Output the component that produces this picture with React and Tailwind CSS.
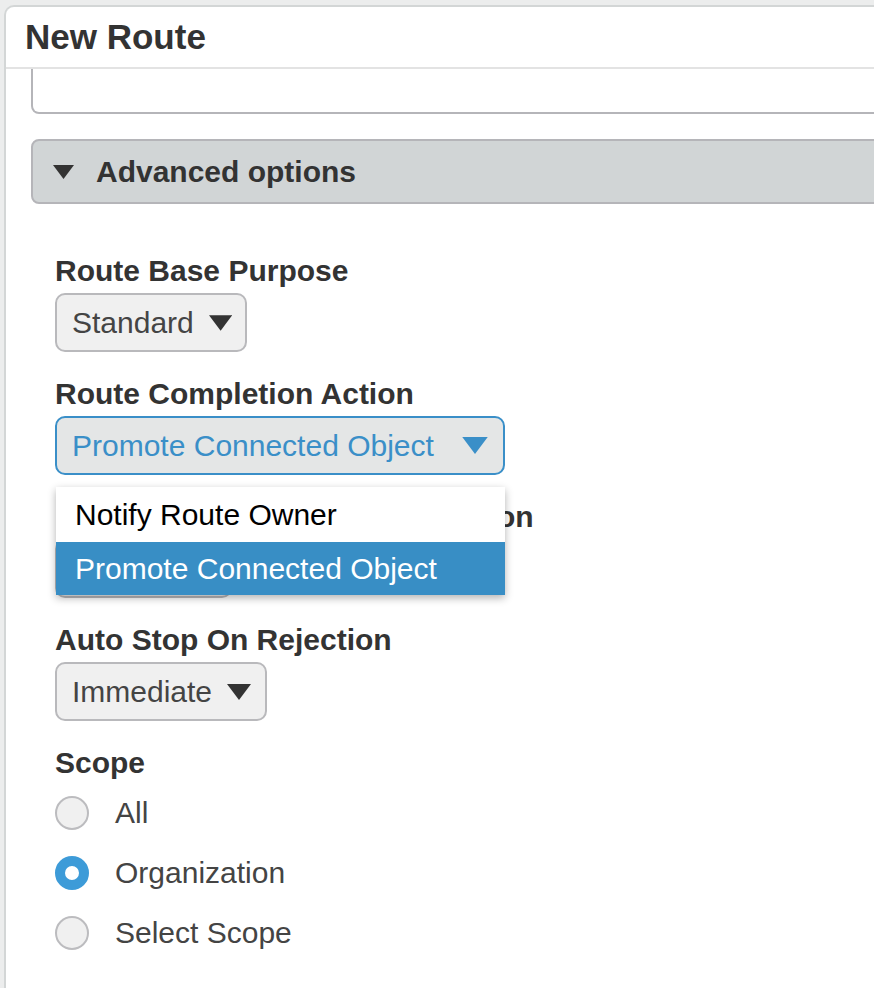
import React from 'react'

const Caret = ({ className }) => (
  <svg className={className} viewBox="0 0 24 16" fill="currentColor">
    <path d="M0 0h24L12 16z" />
  </svg>
)

const Label = ({ children, className = '' }) => (
  <div className={`text-[30px] leading-[34px] font-bold text-[#333] whitespace-nowrap ${className}`}>{children}</div>
)

const Select = ({ value, width }) => (
  <div
    className={`mt-[5px] h-[59px] ${width} flex items-center gap-[15px] pl-[15px] pr-[13px] rounded-[10px] border-2 border-[#b9b9bc] bg-[#f0f0f0] text-[30px] leading-[34px] text-[#444]`}
  >
    <span>{value}</span>
    <Caret className="w-[24px] h-[16px] text-[#333]" />
  </div>
)

const Radio = ({ label, checked }) => (
  <div className="h-[60px] flex items-center gap-[26px]">
    {checked ? (
      <span className="w-[34px] h-[34px] rounded-full border-[10px] border-[#3d9bd8] bg-white" />
    ) : (
      <span className="w-[34px] h-[34px] rounded-full border-2 border-[#bcbcbf] bg-[#f0f0f0]" />
    )}
    <span className="text-[30px] leading-[34px] text-[#444]">{label}</span>
  </div>
)

export default function App() {
  return (
    <div
      className="w-[874px] h-[988px] overflow-hidden bg-[#eceded]"
      style={{ fontFamily: '"Liberation Sans", Arial, sans-serif' }}
    >
      <div className="ml-[4px] mt-[5px] w-[1000px] h-[1000px] bg-white border-t-2 border-l-2 border-[#d3d6d6] rounded-tl-[10px]">
        {/* header */}
        <div className="h-[62px] flex items-center pl-[19px] border-b-2 border-[#e3e3e3]">
          <h1 className="text-[35px] leading-[40px] font-bold text-[#333]">New Route</h1>
        </div>

        <div className="pl-[25px]">
          {/* textarea tail */}
          <div className="h-[45px] border-2 border-t-0 border-[#b5b5b9] rounded-b-[8px]" />

          {/* advanced options bar */}
          <div className="mt-[25px] h-[65px] flex items-center pl-[20px] gap-[22px] bg-[#d1d5d6] border-2 border-[#b5b5b9] rounded-l-[8px]">
            <Caret className="w-[21px] h-[14px] text-[#333]" />
            <span className="text-[30px] leading-[34px] font-bold text-[#333]">Advanced options</span>
          </div>

          {/* form */}
          <div className="pl-[24px] pt-[50px]">
            <Label>Route Base Purpose</Label>
            <Select value="Standard" width="w-[192px]" />

            <div className="mt-[25px]">
              <Label>Route Completion Action</Label>
              <div className="relative w-[450px]">
                <div className="mt-[5px] h-[59px] flex items-center justify-between pl-[15px] pr-[15px] rounded-[10px] border-2 border-[#3a8fc8] bg-[#e4e6e6] text-[30px] leading-[34px] text-[#3a8fc8]">
                  <span>Promote Connected Object</span>
                  <Caret className="w-[26px] h-[17px] text-[#3a8fc8]" />
                </div>
                <div className="absolute left-[1px] right-0 top-[calc(100%+12px)] z-10 bg-white shadow-[0_3px_8px_rgba(0,0,0,0.3)]">
                  <div className="h-[55px] flex items-center pl-[19px] text-[30px] leading-[34px] text-black">
                    Notify Route Owner
                  </div>
                  <div className="h-[53px] flex items-center pl-[19px] text-[30px] leading-[34px] text-white bg-[#388ec5]">
                    Promote Connected Object
                  </div>
                </div>
              </div>
            </div>

            <div className="mt-[25px]">
              <Label className="tracking-[-0.2px]">Notify Owner On Task Completion</Label>
              <Select value="Enabled" width="w-[177px]" />
            </div>

            <div className="mt-[25px]">
              <Label>Auto Stop On Rejection</Label>
              <Select value="Immediate" width="w-[212px]" />
            </div>

            <div className="mt-[25px]">
              <Label>Scope</Label>
              <div className="mt-[3px]">
                <Radio label="All" />
                <Radio label="Organization" checked />
                <Radio label="Select Scope" />
              </div>
            </div>
          </div>
        </div>
      </div>
    </div>
  )
}
